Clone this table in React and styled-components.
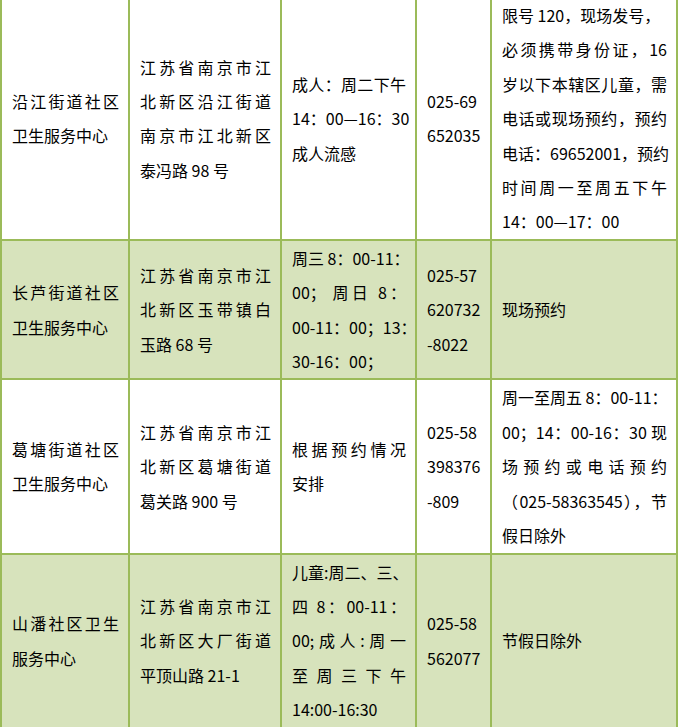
import React from 'react';
import styled, { createGlobalStyle } from 'styled-components';

const GlobalStyle = createGlobalStyle`
    html, body {
        margin: 0;
        padding: 0;
        background: #ffffff;
        overflow: hidden;
    }

    body {
        font-family: "Noto Sans CJK SC", "Liberation Sans", sans-serif;
        color: #000000;
    }
`;

// the view is scrolled a few pixels, so the top border sits just above the window
const ScheduleTable = styled.div`
    display: grid;
    grid-template-columns: 126px 150px 133px 73px 184px;
    gap: 2px;
    width: max-content;
    margin-top: -4px;
    border: 2px solid #9bbb59;
    background: #9bbb59;
`;

const Cell = styled.div`
    display: flex;
    flex-direction: column;
    justify-content: center;
    padding: 0 9px 0 10px;
    background: ${(props) => (props.$shade ? '#d7e3bc' : '#ffffff')};
    font-size: 16px;
    line-height: 34.4px;
`;

const Line = styled.div`
    white-space: nowrap;
    text-align: ${(props) => (props.$fill ? 'justify' : 'left')};
    text-align-last: ${(props) => (props.$fill ? 'justify' : 'left')};
`;

// a leading "=" marks a line that was wrapped and so runs the full cell width
const rows = [
    {
        shade: false,
        cells: [
            ['=沿江街道社区', '卫生服务中心'],
            ['=江苏省南京市江', '=北新区沿江街道', '=南京市江北新区', '泰冯路 98 号'],
            ['=成人：周二下午', '=14：00—16：30', '成人流感'],
            ['025-69', '652035'],
            [
                '限号 120，现场发号，',
                '=必须携带身份证，16',
                '=岁以下本辖区儿童，需',
                '=电话或现场预约，预约',
                '=电话：69652001，预约',
                '=时间周一至周五下午',
                '14：00—17：00',
            ],
        ],
    },
    {
        shade: true,
        cells: [
            ['=长芦街道社区', '卫生服务中心'],
            ['=江苏省南京市江', '=北新区玉带镇白', '玉路 68 号'],
            ['=周三 8：00-11：', '=00；  周日 8：', '=00-11：00；13：', '30-16：00；'],
            ['025-57', '620732', '-8022'],
            ['现场预约'],
        ],
    },
    {
        shade: false,
        cells: [
            ['=葛塘街道社区', '卫生服务中心'],
            ['=江苏省南京市江', '=北新区葛塘街道', '葛关路 900 号'],
            ['=根据预约情况', '安排'],
            ['025-58', '398376', '-809'],
            [
                '=周一至周五 8：00-11：',
                '=00；14：00-16：30 现',
                '=场预约或电话预约',
                '=（025-58363545），节',
                '假日除外',
            ],
        ],
    },
    {
        shade: true,
        cells: [
            ['=山潘社区卫生', '服务中心'],
            ['=江苏省南京市江', '=北新区大厂街道', '平顶山路 21-1'],
            ['=儿童:周二、三、', '=四 8：00-11：', '=00;成人:周一', '=至 周 三 下 午', '14:00-16:30'],
            ['025-58', '562077'],
            ['节假日除外'],
        ],
    },
];

const App = () => {
    return (
        <>
            <GlobalStyle />
            <ScheduleTable>
                {rows.map((row, rowIndex) =>
                    row.cells.map((lines, cellIndex) => (
                        <Cell key={`${rowIndex}-${cellIndex}`} $shade={row.shade}>
                            {lines.map((text, lineIndex) => {
                                const fill = text.startsWith('=');
                                return (
                                    <Line key={lineIndex} $fill={fill}>
                                        {fill ? text.slice(1) : text}
                                    </Line>
                                );
                            })}
                        </Cell>
                    ))
                )}
            </ScheduleTable>
        </>
    );
};

export default App;
